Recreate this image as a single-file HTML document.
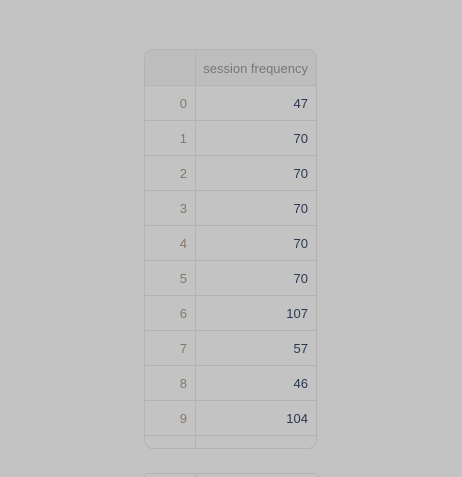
<!DOCTYPE html><html><head><style>
html,body{margin:0;width:462px;height:477px;overflow:hidden}
body{background:#c3c3c3;font-family:"Liberation Sans",sans-serif;position:relative}
.t{position:absolute;left:144px;top:49px;width:171px;height:398px;border:1px solid #b3b3b3;border-radius:9px;overflow:hidden}
.h{position:absolute;left:0;top:0;width:171px;height:36px;background:#bdbdbd;border-bottom:1px solid #b3b3b3;box-sizing:border-box}
.v{position:absolute;left:50px;top:0;width:1px;height:398px;background:#b3b3b3}
.r{position:absolute;left:0;width:171px;height:35px;border-bottom:1px solid #b3b3b3;box-sizing:border-box;font-size:13px}
.i{position:absolute;right:129px;top:10px;color:#857868}
.n{position:absolute;right:8px;top:10px;color:#2b3650}
.t2{position:absolute;left:144px;top:473px;width:175px;height:4px;border:1px solid #b3b3b3;border-bottom:none;border-radius:9px 9px 0 0;box-sizing:border-box}
</style></head><body>
<div class="t">
<div class="h"><span style="position:absolute;right:8px;top:11px;font-size:13px;color:#777">session frequency</span></div>
<div class="r" style="top:36px"><span class="i">0</span><span class="n">47</span></div>
<div class="r" style="top:71px"><span class="i">1</span><span class="n">70</span></div>
<div class="r" style="top:106px"><span class="i">2</span><span class="n">70</span></div>
<div class="r" style="top:141px"><span class="i">3</span><span class="n">70</span></div>
<div class="r" style="top:176px"><span class="i">4</span><span class="n">70</span></div>
<div class="r" style="top:211px"><span class="i">5</span><span class="n">70</span></div>
<div class="r" style="top:246px"><span class="i">6</span><span class="n">107</span></div>
<div class="r" style="top:281px"><span class="i">7</span><span class="n">57</span></div>
<div class="r" style="top:316px"><span class="i">8</span><span class="n">46</span></div>
<div class="r" style="top:351px"><span class="i">9</span><span class="n">104</span></div>
<div class="v"></div>
</div>
<div class="t2"><div style="position:absolute;left:50px;top:0;width:1px;height:4px;background:#b3b3b3"></div></div>
</body></html>
